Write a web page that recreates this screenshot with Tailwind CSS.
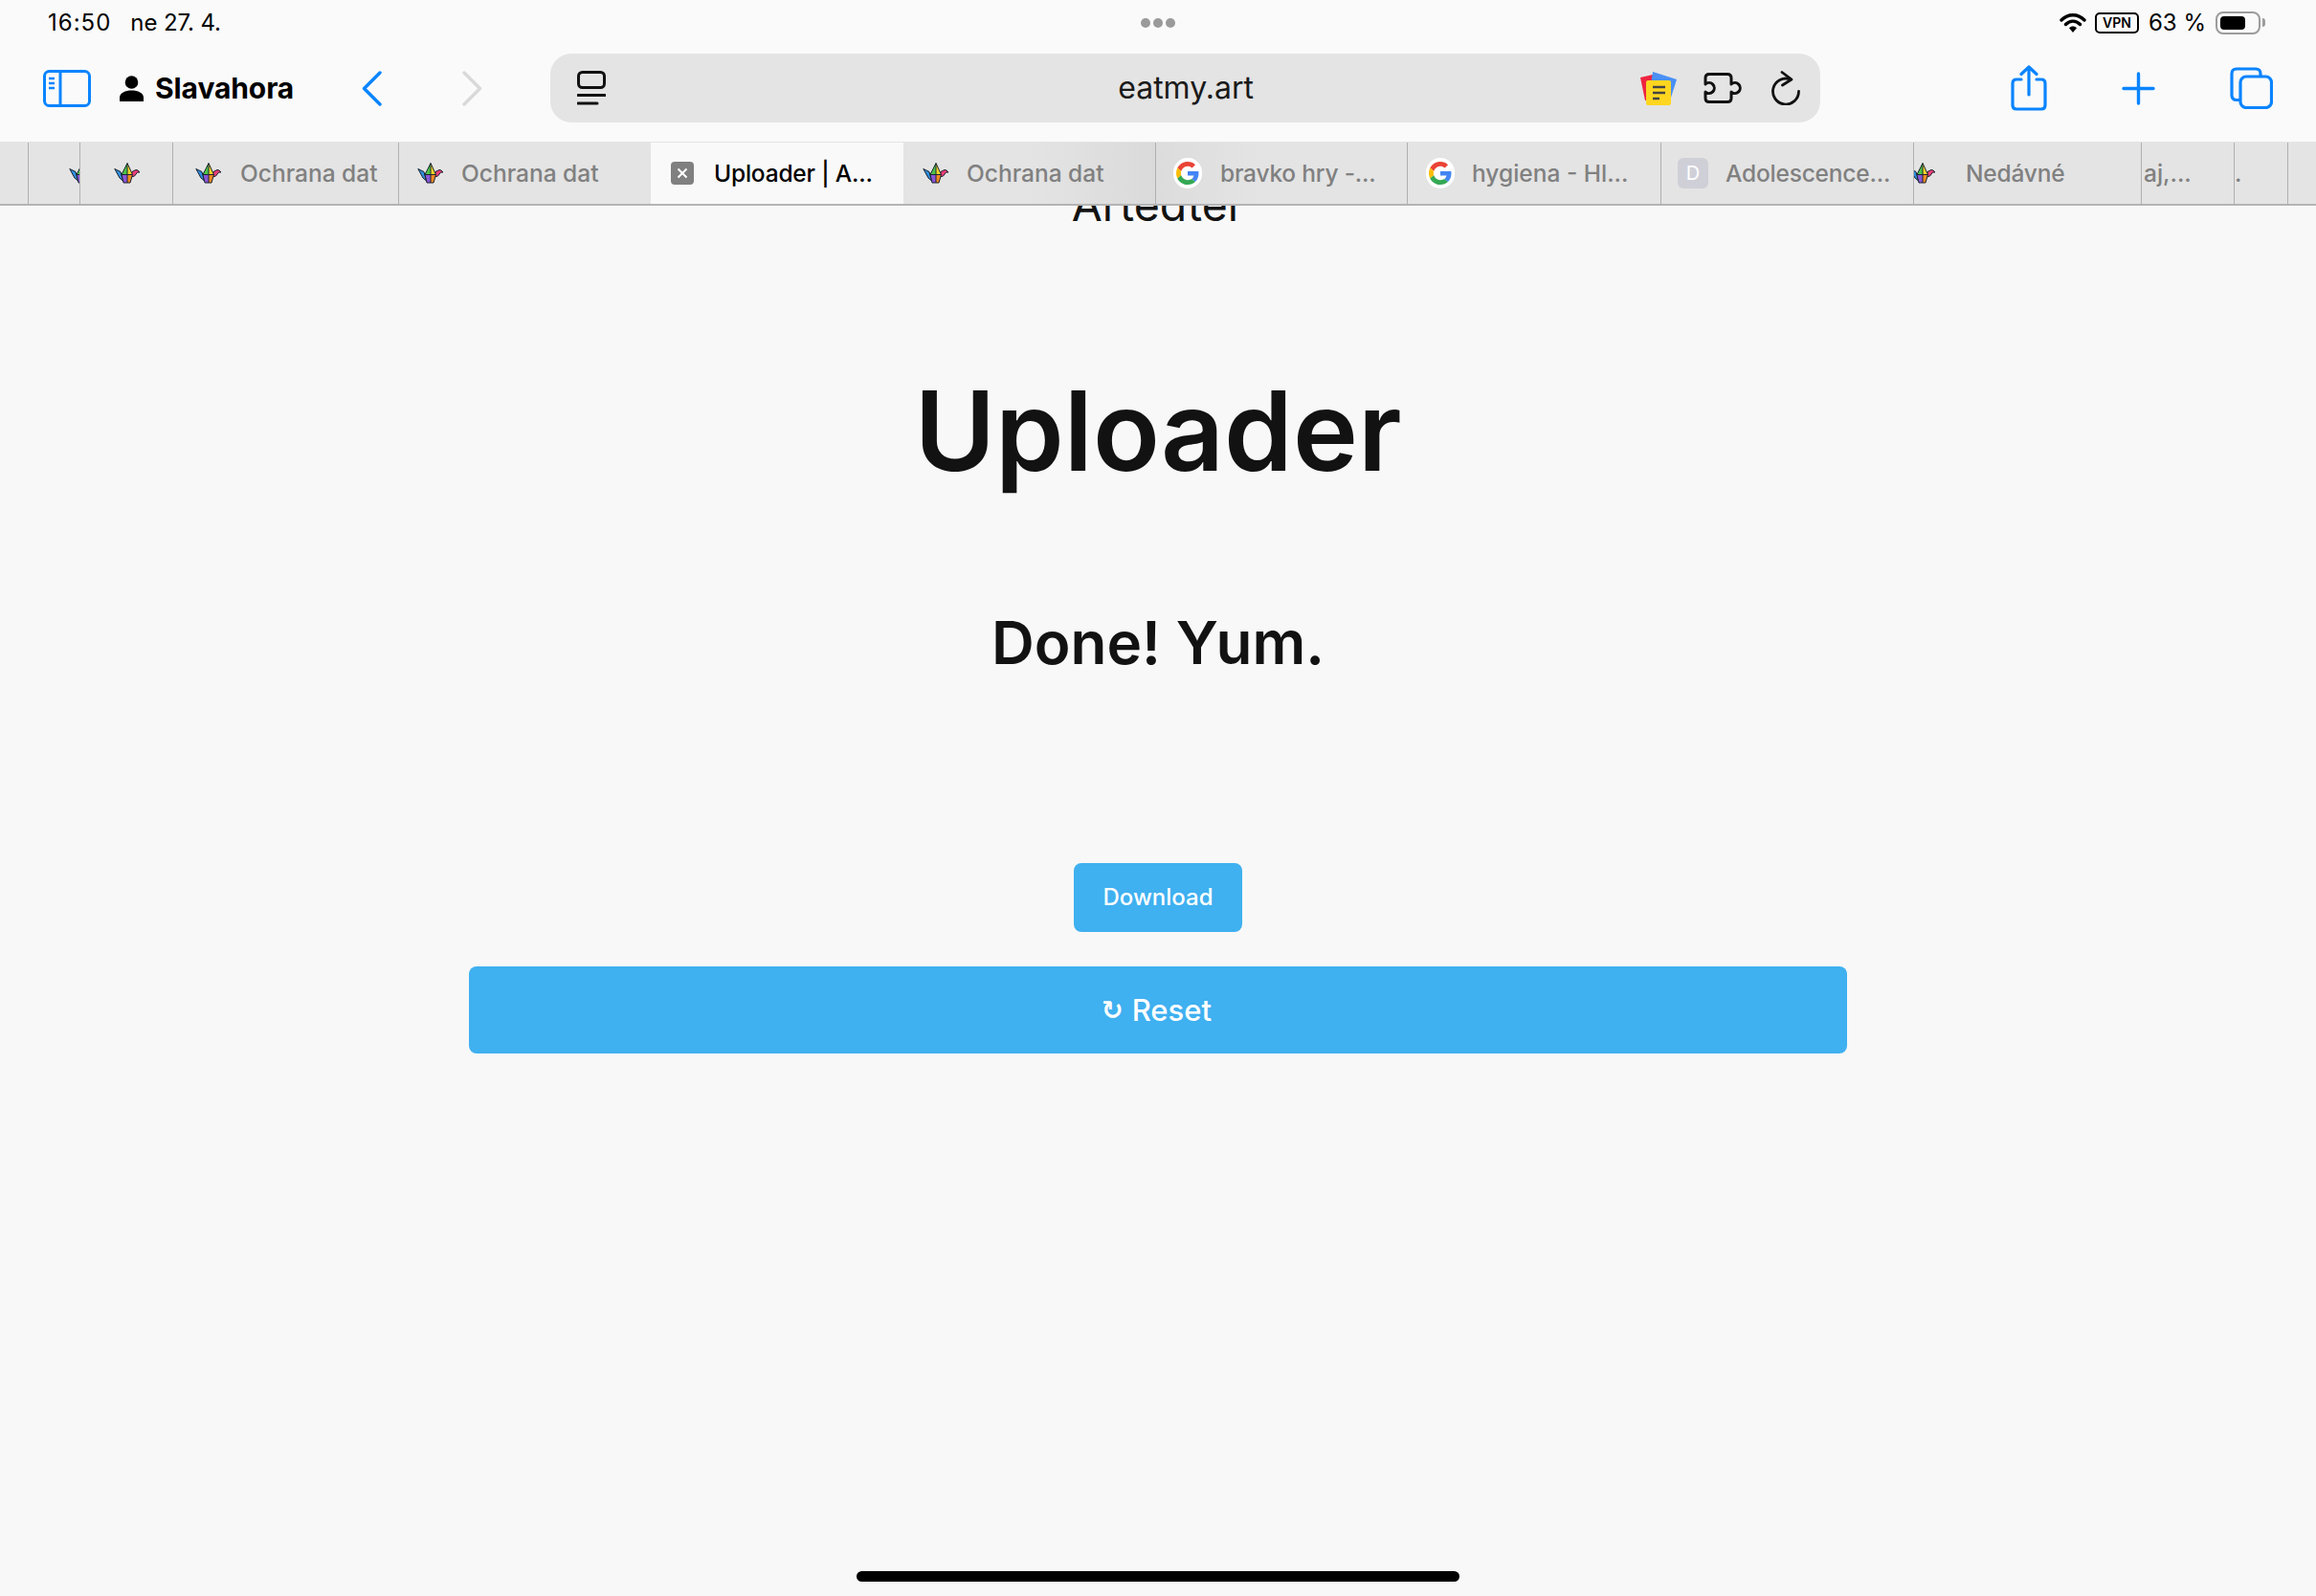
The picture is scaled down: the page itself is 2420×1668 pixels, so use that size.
<!doctype html>
<html lang="cs">
<head>
<meta charset="utf-8">
<script src="https://cdn.jsdelivr.net/npm/@tailwindcss/browser@4"></script>
<title>Uploader</title>
</head>
<body class="m-0 bg-[#f8f8f8]">
<svg width="0" height="0" class="absolute">
  <defs>
    <symbol id="crane" viewBox="0 0 27 22">
      <path d="M0.8 6.5 L7 9.5 L9.5 19 L6 16 Z" fill="#2f8fe0" stroke="#1c2430" stroke-width="1" stroke-linejoin="round"/>
      <path d="M18 15 L19 9.5 L23 7.5 L25 8 L27 10 L24.5 10.2 L21.5 14 Z" fill="#ee3d78" stroke="#1c2430" stroke-width="1" stroke-linejoin="round"/>
      <path d="M14 0.6 L8 12.5 L14 12.5 Z" fill="#4cc44a"/>
      <path d="M14 0.6 L19.5 12.5 L14 12.5 Z" fill="#f2d52c"/>
      <path d="M8 12.5 L14 12.5 L14 21 L10 21 Z" fill="#8a57d8"/>
      <path d="M19.5 12.5 L14 12.5 L14 21 L17 21 Z" fill="#f58a22"/>
      <path d="M14 0.6 L8 12.5 L10 21 L17 21 L19.5 12.5 Z M14 0.6 V21 M8 12.5 H19.5" fill="none" stroke="#1c2430" stroke-width="1" stroke-linejoin="round"/>
    </symbol>
    <symbol id="gg" viewBox="0 0 48 48">
      <path fill="#EA4335" d="M24 9.5c3.54 0 6.71 1.22 9.21 3.6l6.85-6.85C35.9 2.38 30.47 0 24 0 14.62 0 6.51 5.38 2.56 13.22l7.98 6.19C12.43 13.72 17.74 9.5 24 9.5z"/>
      <path fill="#4285F4" d="M46.98 24.55c0-1.57-.15-3.09-.38-4.55H24v9.02h12.94c-.58 2.96-2.26 5.48-4.78 7.18l7.73 6c4.51-4.18 7.09-10.36 7.09-17.65z"/>
      <path fill="#FBBC05" d="M10.53 28.59c-.48-1.45-.76-2.99-.76-4.59s.27-3.14.76-4.59l-7.98-6.19C.92 16.46 0 20.12 0 24c0 3.88.92 7.54 2.56 10.78l7.97-6.19z"/>
      <path fill="#34A853" d="M24 48c6.48 0 11.93-2.13 15.89-5.81l-7.73-6c-2.15 1.45-4.92 2.3-8.16 2.3-6.26 0-11.57-4.22-13.47-9.91l-7.98 6.19C6.51 42.62 14.62 48 24 48z"/>
    </symbol>
  </defs>
</svg>

<div class="relative flex h-[1668px] w-[2420px] flex-col overflow-hidden bg-[#f8f8f8] font-['Inter',sans-serif] text-black">

  <!-- status bar -->
  <div class="grid h-[46px] grid-cols-3 items-center bg-[#fafafa] pl-[50px] pr-[53px] pt-[1px] text-[24px] leading-none">
    <div class="flex gap-[20px]"><span class="tracking-[1px]">16:50</span><span class="tracking-[-0.1px]">ne 27. 4.</span></div>
    <div class="flex justify-center gap-[3px] pl-[3px]">
      <span class="h-[10px] w-[10px] rounded-full bg-[#9a9a9a]"></span>
      <span class="h-[10px] w-[10px] rounded-full bg-[#9a9a9a]"></span>
      <span class="h-[10px] w-[10px] rounded-full bg-[#9a9a9a]"></span>
    </div>
    <div class="flex items-center justify-end">
      <svg width="28" height="22" viewBox="0 0 28 22"><path d="M2 8 C9 1 19 1 26 8 M6.5 12.5 C11 8 17 8 21.5 12.5" fill="none" stroke="#000" stroke-width="3.4" stroke-linecap="round"/><path d="M10 16.2 C12.3 14 15.7 14 18 16.2 L14 21 Z" fill="#000"/></svg>
      <span class="ml-[9px] flex h-[22px] w-[46px] items-center justify-center rounded-[5px] border-2 border-black text-[14px] font-semibold leading-none">VPN</span>
      <span class="ml-[10px]">63 %</span>
      <span class="ml-[10px] flex h-[24px] w-[47px] items-center rounded-[8px] border-2 border-[#9c9c9c] p-[3px]"><span class="h-full w-[26px] rounded-[4px] bg-black"></span></span>
      <span class="ml-[2px] h-[9px] w-[3px] rounded-r-full bg-[#9c9c9c]"></span>
    </div>
  </div>

  <!-- toolbar -->
  <div class="flex h-[102px] items-center bg-[#fafafa] pb-[10px]">
    <svg class="ml-[45px]" width="50" height="39" viewBox="0 0 50 39" fill="none" stroke="#0a84ff" stroke-width="3"><rect x="1.5" y="1.5" width="47" height="36" rx="5"/><path d="M18 1.5 V37.5"/><path d="M6 9 H12 M6 14 H12 M6 19 H12" stroke-width="2.4"/></svg>
    <svg class="ml-[30px]" width="25" height="27" viewBox="0 0 25 27" fill="#000"><circle cx="12.5" cy="7" r="6.8"/><path d="M0 27 V23 C0 18 6 15.5 12.5 15.5 C19 15.5 25 18 25 23 V27 Z"/></svg>
    <span class="ml-[12px] text-[30px] font-bold leading-none tracking-[-0.1px]">Slavahora</span>
    <svg class="ml-[71px]" width="21" height="37" viewBox="0 0 21 37" fill="none" stroke="#0a84ff" stroke-width="3.4" stroke-linecap="round" stroke-linejoin="round"><path d="M19 2 L2.5 18.5 L19 35"/></svg>
    <svg class="ml-[84px]" width="21" height="37" viewBox="0 0 21 37" fill="none" stroke="#d9d9d9" stroke-width="3.4" stroke-linecap="round" stroke-linejoin="round"><path d="M2 2 L18.5 18.5 L2 35"/></svg>

    <div class="ml-[71px] flex h-[72px] w-[1327px] items-center rounded-[22px] bg-[#e4e4e4]">
      <svg class="ml-[28px]" width="30" height="36" viewBox="0 0 30 36" fill="none" stroke="#111" stroke-width="3" stroke-linecap="round"><rect x="1.5" y="1.5" width="27" height="16" rx="4"/><path d="M1 25.5 H29 M1 34 H21"/></svg>
      <span class="ml-[535px] w-[140px] text-[32px] leading-none text-[#1a1a1a]">eatmy.art</span>
      <svg class="ml-[406px]" width="38" height="35" viewBox="0 0 38 35">
        <path d="M0 6 L13 3 L17 30 L5 30 Z" fill="#ef2440"/>
        <path d="M13 0 L38 8 L32 27 L10 20 Z" fill="#4a90f5"/>
        <rect x="6" y="9" width="26" height="26" rx="2" fill="#ffd61f"/>
        <path d="M13 16 H26 M13 22 H26 M13 28 H20" stroke="#444" stroke-width="2.4"/>
      </svg>
      <svg class="ml-[28px]" width="40" height="32" viewBox="0 0 40 32" fill="none" stroke="#111" stroke-width="3" stroke-linejoin="round"><path d="M6 1.5 H25 Q29 1.5 29 5.5 V12 A5.5 5.5 0 1 1 29 20 V26.5 Q29 30.5 25 30.5 H6 Q2 30.5 2 26.5 V20 A5.5 5.5 0 1 0 2 12 V5.5 Q2 1.5 6 1.5 Z"/></svg>
      <svg class="ml-[31px]" width="30" height="36" viewBox="0 0 30 36" fill="none" stroke="#111" stroke-width="2.8" stroke-linecap="round" stroke-linejoin="round"><path d="M20 9 A13.5 13.5 0 1 0 28.5 21.5"/><path d="M11 1.5 L21 9 L11.5 15"/></svg>
    </div>

    <svg class="ml-[199px]" width="38" height="48" viewBox="0 0 38 48" fill="none" stroke="#0a84ff" stroke-width="3.2" stroke-linecap="round" stroke-linejoin="round"><path d="M11 15 H6 Q2 15 2 19 V42 Q2 46 6 46 H32 Q36 46 36 42 V19 Q36 15 32 15 H27"/><path d="M19 31 V2 M11 9.5 L19 2 L27 9.5"/></svg>
    <svg class="ml-[78px]" width="35" height="35" viewBox="0 0 35 35" fill="none" stroke="#0a84ff" stroke-width="3.4" stroke-linecap="round"><path d="M17.5 2 V33 M2 17.5 H33"/></svg>
    <svg class="ml-[78px]" width="45" height="44" viewBox="0 0 45 44" fill="none" stroke="#0a84ff" stroke-width="3.2" stroke-linejoin="round"><path d="M10.5 34.5 H7 Q2 34.5 2 29.5 V7 Q2 2 7 2 H27 Q32 2 32 7 V10"/><rect x="11" y="10" width="32.5" height="32.5" rx="6"/></svg>
  </div>

  <!-- tab bar -->
  <div class="flex h-[67px] shrink-0 border-b-2 border-[#b4b4b4] bg-[#e4e4e4] pt-[1px] text-[24.5px] font-medium leading-none text-[#808080]">
    <div class="w-[30px] shrink-0 border-r border-[#b0b0b0]"></div>
    <div class="flex w-[54px] shrink-0 items-center justify-end overflow-hidden border-r border-[#b0b0b0]">
      <svg class="-mr-[16px] shrink-0" width="27" height="22"><use href="#crane"/></svg>
    </div>
    <div class="flex w-[97px] shrink-0 items-center border-r border-[#b0b0b0] pl-[35px]">
      <svg width="27" height="22"><use href="#crane"/></svg>
    </div>
    <div class="flex w-[236px] shrink-0 items-center gap-[20px] border-r border-[#b0b0b0] pl-[23px]">
      <svg width="27" height="22"><use href="#crane"/></svg><span>Ochrana dat</span>
    </div>
    <div class="flex w-[263px] shrink-0 items-center gap-[19px] pl-[19px]">
      <svg width="27" height="22"><use href="#crane"/></svg><span>Ochrana dat</span>
    </div>
    <div class="flex w-[264px] shrink-0 items-center gap-[21px] bg-[#f9f9f9] pl-[21px] text-black">
      <span class="flex h-[24px] w-[24px] items-center justify-center rounded-[4px] bg-[#808080]"><svg width="12" height="12" viewBox="0 0 12 12" stroke="#fff" stroke-width="2"><path d="M1.5 1.5 L10.5 10.5 M10.5 1.5 L1.5 10.5"/></svg></span><span class="whitespace-nowrap tracking-[-0.2px]">Uploader | A...</span>
    </div>
    <div class="flex w-[264px] shrink-0 items-center gap-[19px] border-r border-[#b0b0b0] bg-gradient-to-r from-[#e4e4e4] via-[#e4e4e4] to-[#dadada] pl-[20px]">
      <svg width="27" height="22"><use href="#crane"/></svg><span>Ochrana dat</span>
    </div>
    <div class="flex w-[263px] shrink-0 items-center gap-[19px] border-r border-[#b0b0b0] bg-gradient-to-r from-[#dcdcdc] to-[#e4e4e4] to-40% pl-[18px]">
      <span class="flex h-[32px] w-[30px] items-center justify-center rounded-full bg-white"><svg width="24" height="24"><use href="#gg"/></svg></span><span class="whitespace-nowrap tracking-[-0.2px]">bravko hry -...</span>
    </div>
    <div class="flex w-[265px] shrink-0 items-center gap-[18px] border-r border-[#b0b0b0] pl-[19px]">
      <span class="flex h-[32px] w-[30px] items-center justify-center rounded-full bg-white"><svg width="24" height="24"><use href="#gg"/></svg></span><span class="whitespace-nowrap">hygiena - Hl...</span>
    </div>
    <div class="flex w-[264px] shrink-0 items-center gap-[18px] border-r border-[#b0b0b0] pl-[17px]">
      <span class="flex h-[32px] w-[32px] items-center justify-center rounded-[6px] bg-[#cfcfd8] text-[20px] font-normal text-white">D</span><span class="tracking-[-0.2px]">Adolescence...</span>
    </div>
    <div class="flex w-[238px] shrink-0 items-center border-r border-[#b0b0b0]">
      <div class="w-[22px] overflow-hidden"><svg class="-ml-[5px]" width="27" height="22"><use href="#crane"/></svg></div><span class="ml-[32px] tracking-[-0.2px]">Nedávné</span>
    </div>
    <div class="flex w-[97px] shrink-0 items-center border-r border-[#b0b0b0] pl-[2px]"><span>aj,...</span></div>
    <div class="flex w-[56px] shrink-0 items-center border-r border-[#b0b0b0]"><span>.</span></div>
  </div>

  <!-- page -->
  <main class="flex flex-1 flex-col items-center overflow-hidden bg-[#f8f8f8] font-['Inter',sans-serif] text-[#121212]">
    <div class="-mt-[27px] text-[46.5px] leading-[52px]">Artedter</div>
    <h1 class="mt-[141px] text-[115px] font-semibold leading-[140px]">Uploader</h1>
    <h2 class="mt-[111px] text-[62px] font-semibold leading-[80px]">Done! Yum.</h2>
    <button class="mt-[190px] h-[72px] w-[176px] rounded-[8px] bg-[#3fb0f0] text-[24px] font-medium leading-none text-white">Download</button>
    <button class="mt-[36px] flex h-[91px] w-[1440px] items-center justify-center gap-[9px] rounded-[8px] bg-[#3fb0f0] pr-[3px] text-[31px] font-medium leading-none text-white"><span class="font-['DejaVu_Sans',sans-serif] text-[27px] font-bold">↻</span><span>Reset</span></button>
  </main>

  <!-- home indicator -->
  <div class="absolute bottom-[15px] left-[895px] h-[11px] w-[630px] rounded-full bg-black"></div>
</div>
</body>
</html>
